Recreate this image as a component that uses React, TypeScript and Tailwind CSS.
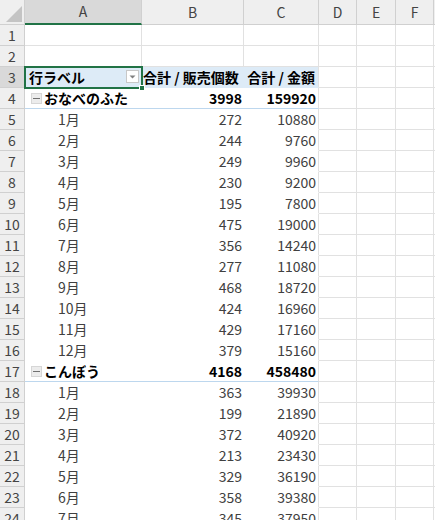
import React from 'react'

type Row =
  | { kind: 'blank' }
  | { kind: 'head' }
  | { kind: 'group'; label: string; qty: number; amount: number }
  | { kind: 'item'; label: string; qty: number; amount: number }

const lids: [number, number][] = [
  [272, 10880], [244, 9760], [249, 9960], [230, 9200], [195, 7800], [475, 19000],
  [356, 14240], [277, 11080], [468, 18720], [424, 16960], [429, 17160], [379, 15160],
]
const clubs: [number, number][] = [
  [363, 39930], [199, 21890], [372, 40920], [213, 23430], [329, 36190], [358, 39380], [345, 37950],
]

const rows: Row[] = [
  { kind: 'blank' },
  { kind: 'blank' },
  { kind: 'head' },
  { kind: 'group', label: 'おなべのふた', qty: 3998, amount: 159920 },
  ...lids.map(([q, a], i) => ({ kind: 'item' as const, label: `${i + 1}月`, qty: q, amount: a })),
  { kind: 'group', label: 'こんぼう', qty: 4168, amount: 458480 },
  ...clubs.map(([q, a], i) => ({ kind: 'item' as const, label: `${i + 1}月`, qty: q, amount: a })),
]

const font = { fontFamily: '"Noto Sans CJK JP", "Noto Sans", sans-serif' }

function EmptyCells() {
  return (
    <>
      <div className="w-[38px] shrink-0 border-r border-b border-[#e1e1e1]" />
      <div className="w-[39px] shrink-0 border-r border-b border-[#e1e1e1]" />
      <div className="w-[38px] shrink-0 border-r border-b border-[#e1e1e1]" />
      <div className="flex-1 border-b border-[#e1e1e1]" />
    </>
  )
}

function RowHeader({ n, active }: { n: number; active?: boolean }) {
  return (
    <div
      className={`w-[25px] shrink-0 flex items-center justify-center border-r border-b border-[#d0d0d0] text-[14px] text-[#444] ${
        active ? 'bg-[#d9d9d9]' : 'bg-[#efefef]'
      }`}
    >
      {n}
    </div>
  )
}

function SheetRow({ row, n }: { row: Row; n: number }) {
  if (row.kind === 'blank') {
    return (
      <div className="flex h-[21px]">
        <RowHeader n={n} />
        <div className="w-[117px] shrink-0 border-r border-b border-[#e1e1e1]" />
        <div className="w-[102px] shrink-0 border-r border-b border-[#e1e1e1]" />
        <div className="w-[75px] shrink-0 border-r border-b border-[#e1e1e1]" />
        <EmptyCells />
      </div>
    )
  }

  if (row.kind === 'head') {
    return (
      <div className="flex h-[21px]">
        <RowHeader n={n} active />
        <div className="relative w-[117px] shrink-0 flex items-center pl-[4px] bg-[#ddebf7] border-r border-b border-[#ddebf7] font-bold text-[14px] text-black">
          行ラベル
          <div className="absolute right-[2px] top-[3px] w-[13px] h-[13px] bg-white border border-[#c8c8c8] flex items-center justify-center">
            <svg width="7" height="4" viewBox="0 0 7 4">
              <path d="M0.5 0.5h6L3.5 3.5z" fill="#808080" />
            </svg>
          </div>
          {/* active cell outline */}
          <div className="absolute -left-[1px] -top-[1px] -right-[2px] -bottom-[2px] border-2 border-[#217346]" />
          <div className="absolute -right-[4px] -bottom-[4px] w-[6px] h-[6px] bg-[#217346] border border-white" />
        </div>
        <div className="w-[102px] shrink-0 flex items-center pl-[1px] bg-[#ddebf7] border-b border-[#ddebf7] font-bold text-[14px] text-black whitespace-nowrap">
          合計 / 販売個数
        </div>
        <div className="w-[75px] shrink-0 flex items-center justify-end pr-[3px] bg-[#ddebf7] border-r border-b border-r-[#e1e1e1] border-b-[#ddebf7] font-bold text-[14px] text-black whitespace-nowrap">
          合計 / 金額
        </div>
        <EmptyCells />
      </div>
    )
  }

  const group = row.kind === 'group'
  const line = group ? 'border-b-[#bdd7ee]' : 'border-b-white'
  const text = group ? 'font-bold text-black' : 'text-[#404040]'

  return (
    <div className="flex h-[21px]">
      <RowHeader n={n} />
      <div className={`w-[117px] shrink-0 flex items-center border-b ${line} text-[14px] ${text} ${group ? 'pl-[6px]' : 'pl-[33px]'}`}>
        {group && (
          <span className="w-[11px] h-[11px] mr-[2px] bg-[#ececec] border border-[#d6d6d6] flex items-center justify-center">
            <span className="block w-[7px] h-px bg-[#707070]" />
          </span>
        )}
        {row.label}
      </div>
      <div className={`w-[102px] shrink-0 flex items-center justify-end pr-[2px] border-b ${line} text-[14px] ${text}`}>
        {row.qty}
      </div>
      <div className={`w-[75px] shrink-0 flex items-center justify-end pr-[2px] border-r border-b border-r-[#e1e1e1] ${line} text-[14px] ${text}`}>
        {row.amount}
      </div>
      <EmptyCells />
    </div>
  )
}

export default function App() {
  const letters = ['A', 'B', 'C', 'D', 'E', 'F']
  const widths = ['w-[117px]', 'w-[102px]', 'w-[75px]', 'w-[38px]', 'w-[39px]', 'w-[38px]']

  return (
    <div className="w-[435px] h-[520px] overflow-hidden bg-white" style={font}>
      {/* column headers */}
      <div className="flex h-[25px]">
        <div className="relative w-[25px] shrink-0 bg-[#efefef] border-r border-b border-[#d0d0d0]">
          <svg className="absolute right-[2px] bottom-[2px]" width="16" height="16" viewBox="0 0 16 16">
            <path d="M16 0V16H0z" fill="#c4c4c4" />
          </svg>
        </div>
        {letters.map((l, i) => (
          <div
            key={l}
            className={`${widths[i]} shrink-0 flex items-center justify-center border-r text-[14px] text-[#444] ${
              i === 0
                ? 'bg-[#d9d9d9] border-r-[#d0d0d0] border-b-2 border-b-[#217346]'
                : 'bg-[#efefef] border-b border-[#d0d0d0]'
            }`}
          >
            {l}
          </div>
        ))}
        <div className="flex-1 bg-[#efefef] border-b border-[#d0d0d0]" />
      </div>
      {rows.map((r, i) => (
        <SheetRow key={i} row={r} n={i + 1} />
      ))}
    </div>
  )
}
